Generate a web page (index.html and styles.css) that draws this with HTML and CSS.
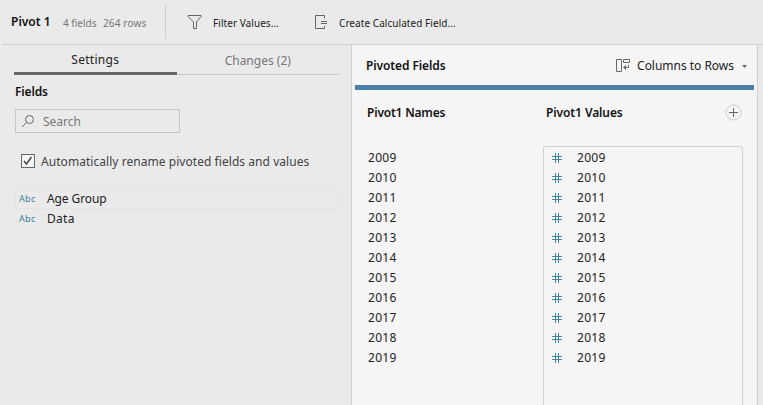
FILE: index.html
```html
<!DOCTYPE html>
<html lang="en">
<head>
<meta charset="utf-8">
<title>Pivot 1</title>
<link rel="stylesheet" href="styles.css">
</head>
<body>
<header class="toolbar">
  <div class="summary"><h1 class="title">Pivot 1</h1><span class="meta count">4 fields</span><span class="meta rows">264 rows</span></div>
  <div class="action filter">
    <svg width="16" height="16" viewBox="0 0 16 16"><path d="M1 1.500h13v1L9.500 8v6.500h-3V8L1 2.500z"/></svg>
    <span>Filter Values...</span>
  </div>
  <div class="action calc">
    <svg width="16" height="16" viewBox="0 0 16 16"><path d="M11.500 4V1.500h-9v13h9V12M8 7.500h6M8 9.500h6"/></svg>
    <span>Create Calculated Field...</span>
  </div>
</header>
<main class="workspace">
  <aside class="sidebar">
    <nav class="tabs"><span class="tab active"><span class="tab-text">Settings</span></span><span class="tab"><span class="tab-text changes">Changes (2)</span></span></nav>
    <h2 class="heading fields-title">Fields</h2>
    <div class="search">
      <svg width="14" height="14" viewBox="0 0 14 14"><circle cx="8.500" cy="5.500" r="4"/><path d="M5.500 8.500L1 13"/></svg>
      <span>Search</span>
    </div>
    <div class="option">
      <span class="checkbox"><svg width="12" height="12" viewBox="0 0 12 12"><path d="M2 6l2.500 3L9.500 2"/></svg></span>
      <span class="option-text">Automatically rename pivoted fields and values</span>
    </div>
    <ul class="fields">
      <li class="field hovered"><span class="type">Abc</span><span class="age">Age Group</span></li>
      <li class="field"><span class="type">Abc</span><span class="data">Data</span></li>
    </ul>
  </aside>
  <section class="panel">
    <div class="panel-head">
      <h2 class="heading pivoted">Pivoted Fields</h2>
      <div class="mode">
        <svg class="mode-icon" width="15" height="14" viewBox="0 0 15 14"><path d="M.5.500h5v12h-5zM7.500.500h6v3h-6zM12.500 6v2.500H9"/><path class="tip" d="M7 8.500l3-2.500v5z"/></svg>
        <span class="mode-text">Columns to Rows</span>
        <svg class="caret" width="5" height="3" viewBox="0 0 5 3"><path d="M0 0h5L2.500 3z"/></svg>
      </div>
    </div>
    <div class="grid">
      <div class="names">
        <h3 class="heading col-title names-title">Pivot1 Names</h3>
        <ul class="years"><li>2009</li><li>2010</li><li>2011</li><li>2012</li><li>2013</li><li>2014</li><li>2015</li><li>2016</li><li>2017</li><li>2018</li><li>2019</li></ul>
      </div>
      <div class="values">
        <div class="value-head"><h3 class="heading col-title values-title">Pivot1 Values</h3>
          <svg class="add" width="17" height="17" viewBox="0 0 17 17"><circle cx="8.500" cy="8.500" r="7.500"/><path d="M8.500 4v9M4 8.500h9"/></svg>
        </div>
        <svg class="defs" width="0" height="0"><symbol id="hash" viewBox="0 0 11 10"><path d="M3.500 0v10M6.500 0v10M0 3.500h10M0 6.500h10"/></symbol></svg>
        <ul class="years boxed">
          <li><svg class="hash"><use href="#hash"/></svg>2009</li>
          <li><svg class="hash"><use href="#hash"/></svg>2010</li>
          <li><svg class="hash"><use href="#hash"/></svg>2011</li>
          <li><svg class="hash"><use href="#hash"/></svg>2012</li>
          <li><svg class="hash"><use href="#hash"/></svg>2013</li>
          <li><svg class="hash"><use href="#hash"/></svg>2014</li>
          <li><svg class="hash"><use href="#hash"/></svg>2015</li>
          <li><svg class="hash"><use href="#hash"/></svg>2016</li>
          <li><svg class="hash"><use href="#hash"/></svg>2017</li>
          <li><svg class="hash"><use href="#hash"/></svg>2018</li>
          <li><svg class="hash"><use href="#hash"/></svg>2019</li>
        </ul>
      </div>
    </div>
  </section>
</main>
</body>
</html>
```
FILE: styles.css
```css
* { box-sizing: border-box; }
body {
  margin: 0;
  height: 405px;
  overflow: hidden;
  background: #eaeaea;
  color: #222;
  font: 12px/20px "Noto Sans", "Open Sans", sans-serif;
  white-space: nowrap;
}
h1, h2, h3, ul { margin: 0; padding: 0; list-style: none; }
svg { fill: none; stroke: #666; flex: none; display: block; }
.heading { font-size: 12px; font-weight: 600; line-height: 20px; color: #111; }

.toolbar {
  display: flex;
  align-items: center;
  height: 45px;
  margin-left: 2px;
  border-bottom: 1px solid #d0d0d0;
}
.summary {
  display: flex;
  align-items: center;
  width: 164px;
  height: 34px;
  padding-left: 9px;
  border-right: 1px solid #d0d0d0;
}
.title { width: 52px; font-size: 12px; font-weight: 600; color: #111; }
.meta { padding-top: 1px; font-size: 10px; color: #777; }
.count { width: 40px; }
.rows { letter-spacing: .15px; }
.action { display: flex; align-items: center; font-size: 10px; }
.action span { padding-top: 1px; letter-spacing: .06px; }
.action svg { margin-right: 10px; }
.filter { width: 126px; margin-left: 21px; }

.workspace { display: flex; height: 360px; }
.sidebar { width: 351px; padding: 0 12px 0 14px; }
.tabs { display: flex; height: 30px; }
.tab {
  flex: 1;
  padding-top: 6px;
  line-height: 20px;
  text-align: center;
  color: #777;
  border-bottom: 1px solid #c8c8c8;
}
.tab.active { padding-top: 5px; color: #222; letter-spacing: .28px; border-bottom: 3px solid #666; }
.fields-title { margin: 7px 0 0 1px; letter-spacing: -.15px; }
.search {
  display: flex;
  align-items: center;
  width: 165px;
  height: 24px;
  margin: 7px 0 0 1px;
  padding-left: 5px;
  border: 1px solid #c6c6c6;
  color: #777;
}
.search span { padding-top: 2px; }
.search svg { margin-right: 8px; }
.option { display: flex; align-items: center; height: 20px; margin: 18px 0 0 7px; color: #444; }
.option-text { padding-top: 2px; letter-spacing: .05px; }
.checkbox { width: 14px; height: 14px; margin-right: 6px; border: 1px solid #666; background: #f5f5f5; }
.checkbox svg { stroke: #444; stroke-width: 1.4; }
.fields { width: 323px; margin: 18px 0 0 1px; }
.field { display: flex; height: 20px; line-height: 18px; padding-left: 3px; border: 1px solid transparent; }
.field.hovered { border-color: #e4e4e4; }
.age { letter-spacing: -.1px; }
.data { letter-spacing: .3px; }
.type { width: 28px; font-size: 9px; letter-spacing: .3px; color: #4281a0; }

.panel { width: 407px; border: solid #d0d0d0; border-width: 0 1px; background: #f5f5f5; }
.panel-head {
  display: flex;
  justify-content: space-between;
  height: 45px;
  margin: 0 3px;
  padding: 11px 7px 0 11px;
  border-bottom: 5px solid #4a80aa;
}
.pivoted { letter-spacing: -.1px; }
.mode { display: flex; align-items: center; height: 20px; }
.mode-icon { margin-right: 6px; }
.mode-icon .tip, .caret { fill: #666; stroke: none; }
.caret { margin-left: 8px; }
.mode-text { letter-spacing: -.02px; }
.grid { display: flex; height: 315px; }
.names { width: 191px; padding: 13px 0 0 15px; }
.names-title { letter-spacing: -.2px; }
.values-title { letter-spacing: -.1px; }
.names .years { margin: 25px 0 0 1px; }
.values { width: 200px; }
.value-head { display: flex; justify-content: space-between; padding: 13px 1px 0 3px; }
.add { margin-top: 1px; }
.add circle { stroke: #ccc; }
.years { letter-spacing: .28px; }
.years li { display: flex; align-items: center; height: 20px; }
.boxed { height: 270px; margin-top: 23px; padding: 1px 8px 0; border: 1px solid #d0d0d0; border-bottom: 0; border-radius: 3px 3px 0 0; }
.defs { position: absolute; }
.hash { width: 11px; height: 10px; margin: -1px 14px 0 0; stroke: #4281a0; }
```
